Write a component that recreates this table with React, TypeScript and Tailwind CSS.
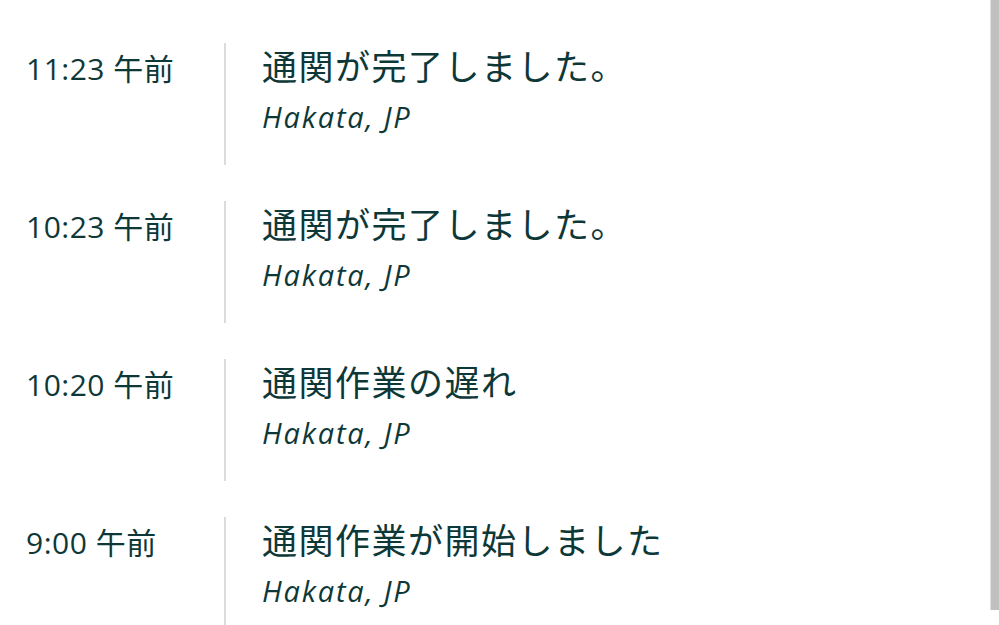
import React from 'react';

interface TrackingEvent {
  time: string;
  status: string;
  location: string;
}

const events: TrackingEvent[] = [
  { time: '11:23 午前', status: '通関が完了しました。', location: 'Hakata, JP' },
  { time: '10:23 午前', status: '通関が完了しました。', location: 'Hakata, JP' },
  { time: '10:20 午前', status: '通関作業の遅れ', location: 'Hakata, JP' },
  { time: '9:00 午前', status: '通関作業が開始しました', location: 'Hakata, JP' },
];

export default function App() {
  return (
    <div
      className="relative w-[999px] h-[625px] overflow-hidden bg-white text-[#0e3838]"
      style={{ fontFamily: '"Open Sans", "Noto Sans CJK JP", sans-serif' }}
    >
      <div className="flex flex-col gap-[36px] pt-[43px]">
        {events.map((ev, i) => (
          <div key={i} className="flex h-[122px]">
            <div className="w-[224px] shrink-0 pl-[26px] text-[30px] leading-[52px] tracking-[0.5px] whitespace-nowrap">
              {ev.time}
            </div>
            <div className="border-l-2 border-[#dcdcdc] pl-[36px]">
              <div className="text-[35px] leading-[48px] tracking-[1.5px] whitespace-nowrap">{ev.status}</div>
              <div className="mt-[6px] text-[29px] leading-[40px] italic tracking-[1.8px]">{ev.location}</div>
            </div>
          </div>
        ))}
      </div>
      {/* scrollbar thumb */}
      <div className="absolute right-0 top-0 h-[610px] w-[9px] bg-[#c0c0c0] border-l border-[#e0e0e0]" />
    </div>
  );
}
